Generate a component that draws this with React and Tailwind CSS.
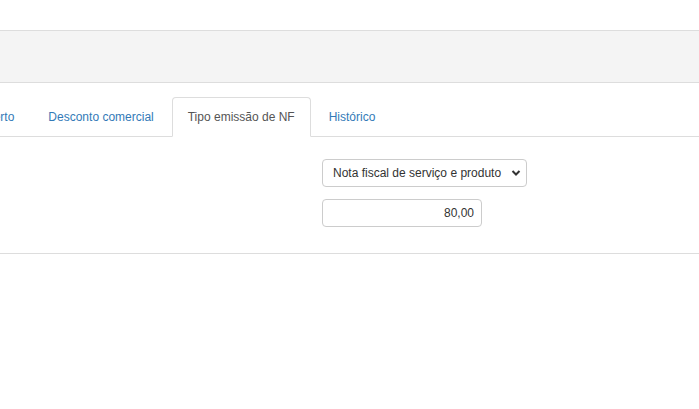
import React, { useState } from 'react';

const tabs = ['Em aberto', 'Desconto comercial', 'Tipo emissão de NF', 'Histórico'];

export default function App() {
    const [active, setActive] = useState(2);
    const [tipo, setTipo] = useState('sp');

    return (
        <div className="min-h-screen bg-white text-[12px] text-[#333] overflow-hidden" style={{ fontFamily: '"Liberation Sans", Arial, sans-serif' }}>
            <div className="h-[30px]" />
            <div className="h-[53px] border-y border-[#dddddd] bg-[#f4f4f4]" />

            <div className="pt-[14px]">
                <ul className="flex border-b border-[#dddddd] pl-0">
                    {tabs.map((t, i) => (
                        <li key={t} className={`-mb-px mr-[2px] ${i === 0 ? '-ml-[57px]' : ''}`}>
                            <button
                                onClick={() => setActive(i)}
                                className={
                                    i === active
                                        ? 'block px-[15px] py-[10px] leading-[18px] border border-[#dddddd] border-b-transparent rounded-t-[4px] bg-white text-[#555]'
                                        : 'block px-[15px] py-[10px] leading-[18px] border border-transparent text-[#337ab7]'
                                }
                            >
                                {t}
                            </button>
                        </li>
                    ))}
                </ul>

                <div className="border-b border-[#dddddd] pt-[22px] pb-[26px]">
                    <div className="grid grid-cols-[322px_1fr] gap-y-[12px]">
                        <div />
                        <div className="relative w-[205px]">
                            <select
                                value={tipo}
                                onChange={(e) => setTipo(e.target.value)}
                                className="appearance-none w-full h-[28px] pl-[10px] pr-[24px] border border-[#cccccc] rounded-[4px] bg-white text-[12px] text-[#333] outline-none"
                            >
                                <option value="sp">Nota fiscal de serviço e produto</option>
                                <option value="s">Nota fiscal de serviço</option>
                                <option value="p">Nota fiscal de produto</option>
                            </select>
                            <svg className="pointer-events-none absolute right-[6px] top-[10px]" width="10" height="8" viewBox="0 0 10 8">
                                <path d="M1.5 2 L5 5.5 L8.5 2" fill="none" stroke="#333" strokeWidth="2" />
                            </svg>
                        </div>
                        <div />
                        <input
                            defaultValue="80,00"
                            className="w-[160px] h-[28px] px-[7px] border border-[#cccccc] rounded-[4px] text-right text-[12px] text-[#333] outline-none"
                        />
                    </div>
                </div>
            </div>
        </div>
    );
}
